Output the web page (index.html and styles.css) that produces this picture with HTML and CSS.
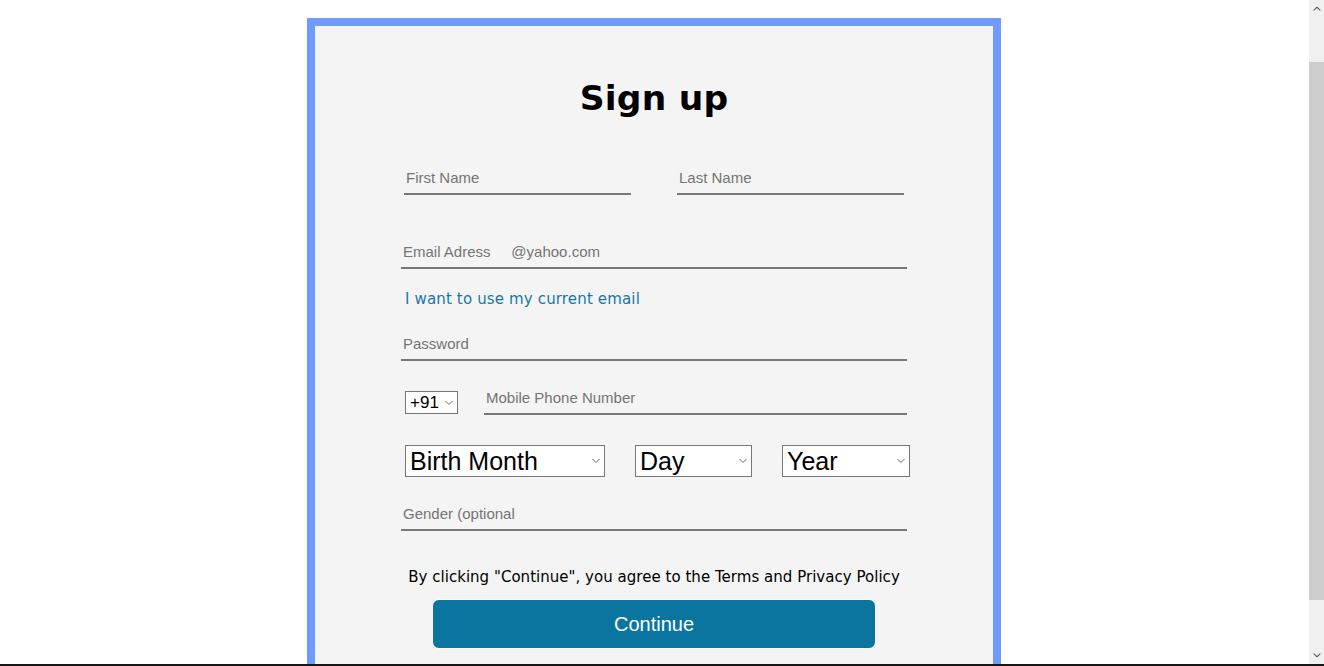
FILE: index.html
```html
<!DOCTYPE html>
<html lang="en">
<head>
<meta charset="utf-8">
<title>Sign up</title>
<link rel="stylesheet" href="styles.css">
</head>
<body>
<div class="screen">
  <div class="viewport">
    <main class="page">
      <form class="card">
        <h1 class="title">Sign up</h1>
        <div class="name-row">
          <input class="field" type="text" placeholder="First Name">
          <input class="field" type="text" placeholder="Last Name">
        </div>
        <input class="field email" type="text" placeholder="Email Adress&nbsp;&nbsp;&nbsp;&nbsp;&nbsp;@yahoo.com">
        <a class="alt-link" href="#">I want to use my current email</a>
        <input class="field password" type="password" placeholder="Password">
        <div class="phone-row">
          <span class="sel sel-code">
            <select><option>+91</option></select>
            <svg class="chev" width="8" height="5" viewBox="0 0 8 5"><polyline points="0.5,0.5 4,4 7.5,0.5" fill="none" stroke="#6b6b6b" stroke-width="1"/></svg>
          </span>
          <input class="field phone" type="tel" placeholder="Mobile Phone Number">
        </div>
        <div class="date-row">
          <span class="sel sel-month">
            <select><option>Birth Month</option></select>
            <svg class="chev" width="8" height="5" viewBox="0 0 8 5"><polyline points="0.5,0.5 4,4 7.5,0.5" fill="none" stroke="#6b6b6b" stroke-width="1"/></svg>
          </span>
          <span class="sel sel-day">
            <select><option>Day</option></select>
            <svg class="chev" width="8" height="5" viewBox="0 0 8 5"><polyline points="0.5,0.5 4,4 7.5,0.5" fill="none" stroke="#6b6b6b" stroke-width="1"/></svg>
          </span>
          <span class="sel sel-year">
            <select><option>Year</option></select>
            <svg class="chev" width="8" height="5" viewBox="0 0 8 5"><polyline points="0.5,0.5 4,4 7.5,0.5" fill="none" stroke="#6b6b6b" stroke-width="1"/></svg>
          </span>
        </div>
        <input class="field gender" type="text" placeholder="Gender (optional">
        <p class="terms">By clicking "Continue", you agree to the Terms and Privacy Policy</p>
        <button class="continue" type="button">Continue</button>
      </form>
    </main>
    <div class="scrollbar">
      <div class="sb-btn">
        <svg width="8" height="5" viewBox="0 0 8 5"><polygon points="0,4.5 4,0.5 8,4.5 6.6,4.5 4,2 1.4,4.5" fill="#505050"/></svg>
      </div>
      <div class="sb-track"><div class="sb-thumb"></div></div>
      <div class="sb-btn">
        <svg width="8" height="5" viewBox="0 0 8 5"><polygon points="0,0.5 4,4.5 8,0.5 6.6,0.5 4,3 1.4,0.5" fill="#505050"/></svg>
      </div>
    </div>
  </div>
  <div class="taskbar-edge"></div>
</div>
</body>
</html>
```

FILE: styles.css
```css
html, body {
  margin: 0;
  padding: 0;
  height: 100%;
  overflow: hidden;
  background: #ffffff;
}

.screen {
  display: flex;
  flex-direction: column;
  height: 666px;
}

.viewport {
  display: flex;
  height: 664px;
}

.page {
  flex: 1;
  min-width: 0;
  overflow: hidden;
  padding-right: 1px;
  background: #ffffff;
}

.card {
  box-sizing: border-box;
  width: 694px;
  margin: 18px auto 0;
  border: 8px solid #6f9bff;
  background: #f4f4f4;
  padding: 52px 86px 60px;
  display: flex;
  flex-direction: column;
}

.title {
  margin: 0;
  height: 40px;
  line-height: 40px;
  text-align: center;
  font-family: "DejaVu Sans", Verdana, sans-serif;
  font-weight: bold;
  font-size: 34.5px;
  letter-spacing: 0.2px;
  color: #000000;
}

.field {
  display: block;
  box-sizing: border-box;
  width: 100%;
  min-width: 0;
  margin: 0;
  padding: 1px 2px 7px;
  border: none;
  border-bottom: 2px solid #777777;
  background: transparent;
  font-family: "Liberation Sans", Arial, sans-serif;
  font-size: 15px;
  line-height: 17px;
  color: #222222;
  outline: none;
}

.field::placeholder {
  color: #757575;
  opacity: 1;
}

.name-row {
  display: flex;
  gap: 46px;
  padding: 0 3px;
  margin-top: 50px;
}

.name-row .field {
  flex: 1;
}

.email {
  margin-top: 47px;
}

.alt-link {
  display: block;
  margin: 21px 0 0 4px;
  font-family: "DejaVu Sans", Verdana, sans-serif;
  font-size: 15px;
  line-height: 18px;
  letter-spacing: 0.15px;
  color: #1877a6;
  text-decoration: none;
}

.password {
  margin-top: 26px;
}

.phone-row {
  display: flex;
  align-items: flex-end;
  gap: 26px;
  margin-top: 27px;
}

.phone-row .phone {
  flex: 1;
}

.sel {
  position: relative;
  display: inline-flex;
  flex: none;
}

.sel select {
  -webkit-appearance: none;
  appearance: none;
  box-sizing: border-box;
  width: 100%;
  height: 100%;
  margin: 0;
  padding: 0 14px 0 4px;
  border: 1px solid #767676;
  border-radius: 0;
  background: #ffffff;
  color: #000000;
  font-family: "Liberation Sans", Arial, sans-serif;
  outline: none;
}

.sel .chev {
  position: absolute;
  right: 5px;
  top: 50%;
  transform: translateY(-50%);
  pointer-events: none;
}

.sel-code {
  width: 53px;
  height: 23px;
  margin: 0 0 1px 4px;
}

.sel-code select {
  font-size: 17px;
  padding-left: 4px;
}

.date-row {
  display: flex;
  gap: 30px;
  margin: 30px 0 0 4px;
}

.date-row .sel {
  height: 32px;
}

.date-row select {
  font-size: 25px;
}

.sel-month {
  width: 200px;
}

.sel-day {
  width: 117px;
}

.sel-year {
  width: 128px;
}

.gender {
  margin-top: 27px;
}

.terms {
  margin: 37px 0 0;
  text-align: center;
  font-family: "DejaVu Sans", Verdana, sans-serif;
  font-size: 15px;
  line-height: 18px;
  letter-spacing: 0.03px;
  color: #000000;
}

.continue {
  display: block;
  box-sizing: border-box;
  width: 444px;
  height: 50px;
  margin: 13px auto 0;
  border: 1px solid #ffffff;
  border-radius: 7px;
  background: #0a76a0;
  color: #ffffff;
  font-family: "Liberation Sans", Arial, sans-serif;
  font-size: 20px;
  cursor: pointer;
}

.scrollbar {
  width: 15px;
  flex: none;
  display: flex;
  flex-direction: column;
  background: #f0f0f0;
}

.sb-btn {
  height: 17px;
  display: flex;
  align-items: center;
  justify-content: center;
}

.sb-track {
  flex: 1;
  padding-top: 45px;
}

.sb-thumb {
  height: 538px;
  background: #cdcdcd;
}

.taskbar-edge {
  height: 2px;
  background: #161616;
}
```
